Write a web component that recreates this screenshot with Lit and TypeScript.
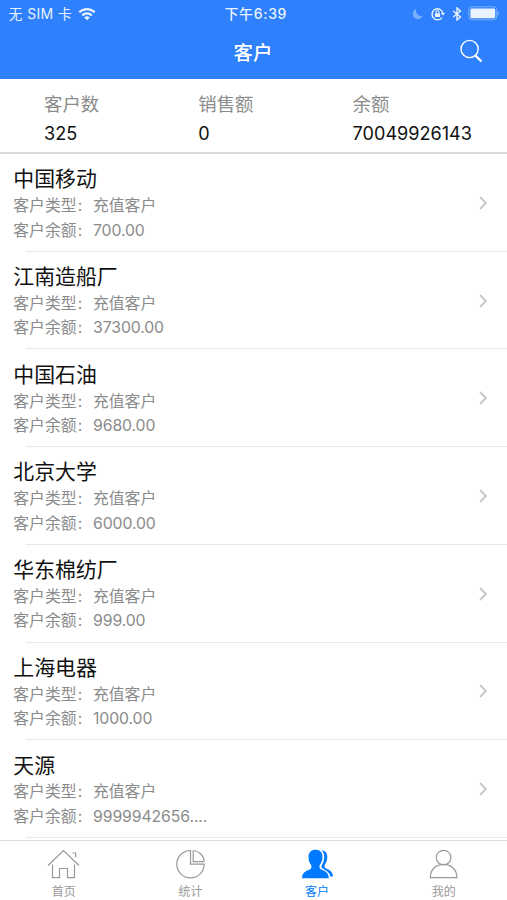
import { LitElement, html, css, svg } from "lit";
import { customElement, property } from "lit/decorators.js";

interface Customer {
  name: string;
  type: string;
  balance: string;
}

const CUSTOMERS: Customer[] = [
  { name: "中国移动", type: "充值客户", balance: "700.00" },
  { name: "江南造船厂", type: "充值客户", balance: "37300.00" },
  { name: "中国石油", type: "充值客户", balance: "9680.00" },
  { name: "北京大学", type: "充值客户", balance: "6000.00" },
  { name: "华东棉纺厂", type: "充值客户", balance: "999.00" },
  { name: "上海电器", type: "充值客户", balance: "1000.00" },
  { name: "天源", type: "充值客户", balance: "9999942656...." },
];

const STATS = [
  { label: "客户数", value: "325" },
  { label: "销售额", value: "0" },
  { label: "余额", value: "70049926143" },
];

const TABS = [
  {
    label: "首页",
    icon: svg`<path d="M1 16.500 16.500 1.500 32 16.500M5.500 15.500v13.200H12.500v-9.200h8v9.200h7V15.500M25.500 4h3.200v4.500"/>`,
  },
  {
    label: "统计",
    icon: svg`<path d="M16.500 1.500a13.700 13.700 0 1 0 13.700 13.700H16.500z"/><path d="M19.200 1.500v11.200h11M19.200 1.500c6 .5 10.700 5.200 11 11.200"/>`,
  },
  {
    label: "客户",
    active: true,
    icon: svg`<path class="solid" d="M14.500.8c4.600 0 7 2.700 7 7.200 0 3.700-1.300 6-2.500 7.600-.9 1.300-.7 3.700.5 4.400 3.400 2 8.300 2.600 8.300 9.200H1c0-6.600 5.300-7.200 8.500-9.200 1.200-.7 1.200-3.100.3-4.400C8.600 14 7.500 11.700 7.500 8c0-4.500 2.500-7.200 7-7.200z"/><path class="solid" d="M20.600 1.300c3.900.4 5.700 2.700 5.700 7 0 3.300-1.200 5.500-2.300 7-.9 1.300-.6 3 .4 3.700 3.200 2.100 7.300 2.500 7.600 8.500h-2.700c-.9-5.200-5-6.300-7.900-8-1.100-.7-1.200-2.400-.4-3.800 1.200-1.900 2.200-4.300 2.200-7.700 0-3-.8-5.300-2.600-6.700z"/>`,
  },
  {
    label: "我的",
    icon: svg`<circle cx="16.600" cy="8.600" r="7.300"/><path d="M3.300 28.700c0-8.200 5.600-13.300 13.300-13.300s13.300 5.100 13.300 13.300z"/>`,
  },
];

const base = css`
  :host {
    display: block;
    box-sizing: border-box;
    font-family: Inter, "Noto Sans CJK SC", sans-serif;
    white-space: nowrap;
  }
  * {
    box-sizing: border-box;
  }
  svg {
    display: block;
    fill: none;
    stroke: currentColor;
  }
`;

@customElement("status-bar")
class StatusBar extends LitElement {
  static styles = [
    base,
    css`
      :host {
        display: grid;
        grid-template-columns: 1fr auto 1fr;
        align-items: center;
        height: 27px;
        padding: 0 8px 0 8.500px;
        color: #e9f3ff;
        font-size: 14px;
        line-height: 20px;
      }
      .side {
        display: flex;
        align-items: center;
      }
      .carrier {
        letter-spacing: 0.35px;
        margin-right: 6px;
      }
      .time {
        font-weight: 500;
        letter-spacing: 0.65px;
        margin-left: 4px;
      }
      .end {
        justify-content: flex-end;
      }
      .moon { opacity: 0.4; margin-right: 8px; }
      .lock { margin-right: 7px; }
      .bt { margin-right: 6px; }
      .solid { fill: currentColor; stroke: none; }
    `,
  ];
  render() {
    return html`
      <div class="side">
        <span class="carrier">无 SIM 卡</span>
        <svg width="18" height="14" viewBox="0 0 18 14" stroke-width="2.200">
          <path d="M1.300 5.300a10.800 10.800 0 0 1 15.400 0M4.200 8.400a6.700 6.700 0 0 1 9.600 0" />
          <path class="solid" d="M9 13.300 6.200 10.500a4 4 0 0 1 5.600 0z" />
        </svg>
      </div>
      <span class="time">下午6:39</span>
      <div class="side end">
        <svg class="moon" width="11" height="12" viewBox="0 0 11 12">
          <path class="solid" d="M4 .7C3.200 4.800 6 8.500 10.600 8.300 9 10.700 6.800 11.600 4.800 11.100 0 10 -.8 3.700 4 .7z" />
        </svg>
        <svg class="lock" width="14" height="14" viewBox="0 0 14 14" stroke-width="1.400">
          <path d="M11 10.600A5.500 5.500 0 1 1 11.900 6" />
          <path class="solid" d="M9.900 5.900h4.100l-2 2.700z" />
          <rect class="solid" x="3.900" y="6.200" width="5.200" height="3.900" rx=".5" />
          <path d="M5 6.500V5.200a1.500 1.500 0 0 1 3 0v1.300" stroke-width="1.100" />
        </svg>
        <svg class="bt" width="10" height="14" viewBox="0 0 10 14" stroke-width="1.400">
          <path d="m1.200 4 7.300 6L5 13V1l3.500 3-7.300 6" />
        </svg>
        <svg width="31" height="15" viewBox="0 0 31 15">
          <rect x=".8" y=".8" width="28" height="13" rx="3" opacity=".4" />
          <rect class="solid" x="2.400" y="2.600" width="24.800" height="9.600" rx="1.300" />
          <path class="solid" opacity=".45" d="M29.600 5c1.700.4 1.700 4.400 0 4.800z" />
        </svg>
      </div>
    `;
  }
}

@customElement("nav-header")
class NavHeader extends LitElement {
  static styles = [
    base,
    css`
      :host {
        display: grid;
        grid-template-columns: 1fr auto 1fr;
        align-items: center;
        height: 52px;
        padding: 0 24px 2px 23px;
        color: #fff;
      }
      .title {
        grid-column: 2;
        font-size: 19.500px;
        font-weight: 500;
        line-height: 30px;
        padding-top: 1px;
      }
      .search {
        justify-self: end;
        margin-top: -2px;
      }
    `,
  ];
  render() {
    return html`
      <span class="title">客户</span>
      <svg class="search" width="23" height="24" viewBox="0 0 23 24" stroke-width="1.400">
        <circle cx="9.600" cy="10" r="8.600" />
        <path d="m15.500 16.600 6 5.900" stroke-width="2.300" />
      </svg>
    `;
  }
}

@customElement("stats-bar")
class StatsBar extends LitElement {
  static styles = [
    base,
    css`
      :host {
        display: grid;
        grid-template-columns: 154.300px 154.300px 1fr;
        height: 75px;
        padding: 11px 0 0 44px;
        border-bottom: 2px solid #d9d9d9;
      }
      .label {
        color: #8b8b8b;
        font-size: 18.400px;
        line-height: 28px;
      }
      .value {
        color: #111;
        font-size: 18.100px;
        line-height: 31px;
      }
    `,
  ];
  render() {
    return STATS.map(
      (s) => html`<div>
        <div class="label">${s.label}</div>
        <div class="value">${s.value}</div>
      </div>`
    );
  }
}

@customElement("customer-row")
class CustomerRow extends LitElement {
  @property({ attribute: false }) customer!: Customer;
  static styles = [
    base,
    css`
      :host {
        display: flex;
        align-items: center;
        justify-content: space-between;
        height: 97.720px;
        padding: 0 19px 0 13.300px;
        background: linear-gradient(#e9e9e9, #e9e9e9) 26px 100% / 100% 1px no-repeat;
      }
      .text {
        padding-top: 1.700px;
      }
      .name {
        color: #111;
        font-size: 20.900px;
        line-height: 30px;
        margin-bottom: -0.200px;
      }
      .line {
        display: flex;
        color: #8b8b8b;
        font-size: 15.800px;
        line-height: 24.500px;
      }
      .key {
        width: 79.700px;
      }
      .colon {
        margin-left: 1.200px;
      }
      .amount {
        letter-spacing: -0.100px;
      }
      .chevron {
        color: #c7c7cc;
      }
    `,
  ];
  private line(key: string, value: string, cls = "") {
    return html`<div class="line">
      <span class="key">${key}<span class="colon">:</span></span><span class=${cls}>${value}</span>
    </div>`;
  }
  render() {
    const c = this.customer;
    return html`
      <div class="text">
        <div class="name">${c.name}</div>
        ${this.line("客户类型", c.type)} ${this.line("客户余额", c.balance, "amount")}
      </div>
      <svg class="chevron" width="10" height="14" viewBox="0 0 10 14" stroke-width="2">
        <path d="m2 1 5.900 6L2 13" />
      </svg>
    `;
  }
}

@customElement("tab-bar")
class TabBar extends LitElement {
  static styles = [
    base,
    css`
      :host {
        display: grid;
        grid-template-columns: repeat(4, 1fr);
        height: 60px;
        padding-left: 0.500px;
        border-top: 1px solid #dcdcdc;
        background: #fff;
      }
      .tab {
        display: flex;
        flex-direction: column;
        align-items: center;
        padding-top: 7.500px;
        color: #999;
        font-size: 12px;
        line-height: 18px;
        gap: 4.500px;
      }
      .active {
        color: #007aff;
      }
      .solid {
        fill: currentColor;
        stroke: none;
      }
    `,
  ];
  render() {
    return TABS.map(
      (t) => html`<div class="tab ${t.active ? "active" : ""}">
        <svg width="33" height="30" viewBox="0 0 33 30" stroke-width="1.200">${t.icon}</svg>
        <span>${t.label}</span>
      </div>`
    );
  }
}

@customElement("app-root")
class AppRoot extends LitElement {
  static styles = [
    base,
    css`
      :host {
        display: flex;
        flex-direction: column;
        height: 900px;
        overflow: hidden;
        background: #fff;
      }
      .top {
        background: #2f80fc;
        flex: none;
      }
      stats-bar,
      tab-bar {
        flex: none;
      }
      .list {
        flex: 1;
        min-height: 0;
        overflow: hidden;
      }
    `,
  ];
  render() {
    return html`
      <div class="top">
        <status-bar></status-bar>
        <nav-header></nav-header>
      </div>
      <stats-bar></stats-bar>
      <div class="list">
        ${CUSTOMERS.map((c) => html`<customer-row .customer=${c}></customer-row>`)}
      </div>
      <tab-bar></tab-bar>
    `;
  }
}
